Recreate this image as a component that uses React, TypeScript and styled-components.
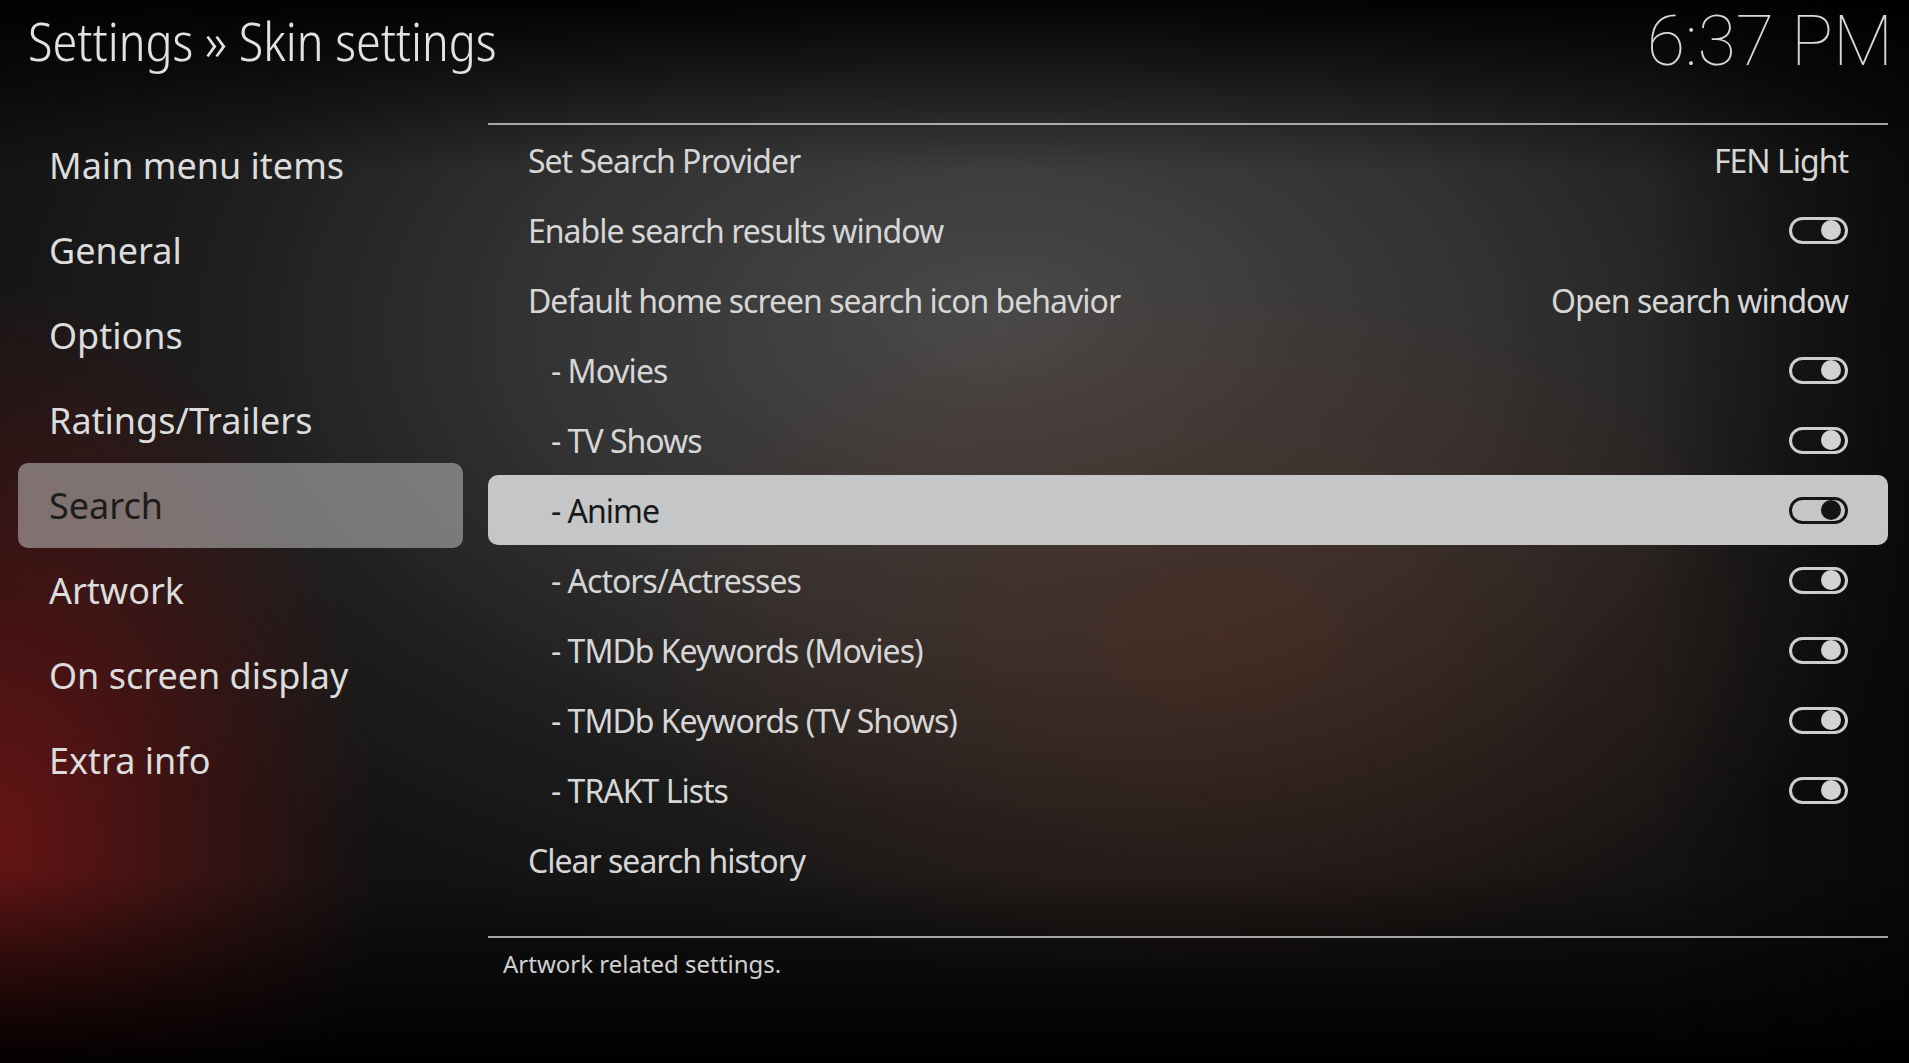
import React from 'react';
import styled, { createGlobalStyle } from 'styled-components';

const GlobalStyle = createGlobalStyle`
  html, body {
    margin: 0;
    padding: 0;
    background: #080808;
  }
  body {
    width: 1909px;
    height: 1063px;
    overflow: hidden;
    font-family: 'Noto Sans', 'Open Sans', sans-serif;
  }
`;

const Screen = styled.div`
  width: 1909px;
  height: 1063px;
  overflow: hidden;
  display: flex;
  flex-direction: column;
  background:
    linear-gradient(to bottom, rgba(0, 0, 0, 0.92) 0px, rgba(0, 0, 0, 0) 170px),
    linear-gradient(to top, rgba(0, 0, 0, 0.95) 0px, rgba(0, 0, 0, 0) 190px),
    linear-gradient(to left, rgba(0, 0, 0, 0.55) 0px, rgba(0, 0, 0, 0) 260px),
    radial-gradient(ellipse 380px 560px at 0px 840px, rgba(120, 20, 20, 0.8), rgba(120, 20, 20, 0) 100%),
    radial-gradient(ellipse 620px 380px at 1220px 640px, rgba(85, 45, 30, 0.55), rgba(85, 45, 30, 0) 100%),
    radial-gradient(ellipse 1100px 650px at 1000px 330px, #4a4a4a 0%, #313131 45%, #1c1c1c 75%, #121212 100%);
`;

const Header = styled.header`
  height: 82px;
  display: flex;
  align-items: center;
  justify-content: space-between;
  padding: 0 16px 0 28px;
`;

const Title = styled.h1`
  margin: 0;
  font-family: 'Noto Sans Display', 'Noto Sans', sans-serif;
  font-weight: 300;
  font-stretch: 87.5%;
  font-size: 52.5px;
  line-height: 1;
  color: #e2e2e2;
`;

const Clock = styled.div`
  font-family: Roboto, 'Inter', sans-serif;
  font-weight: 100;
  font-size: 70px;
  line-height: 1;
  color: #d8d8d8;
`;

const Body = styled.main`
  margin-top: 41px;
  padding-left: 18px;
  display: grid;
  grid-template-columns: 445px 1400px;
  column-gap: 25px;
`;

const Menu = styled.nav`
  display: flex;
  flex-direction: column;
`;

const MenuItem = styled.div<{ $active?: boolean }>`
  height: 85px;
  display: flex;
  align-items: center;
  padding-left: 31px;
  border-radius: 10px;
  font-size: 36px;
  color: ${(p) => (p.$active ? '#1c1c1c' : '#dcdcdc')};
  background: ${(p) => (p.$active ? 'rgba(205, 205, 205, 0.5)' : 'transparent')};
`;

const Panel = styled.section`
  display: flex;
  flex-direction: column;
`;

const Divider = styled.div<{ $gap?: number }>`
  height: 2px;
  margin-top: ${(p) => p.$gap ?? 0}px;
  background: rgba(215, 215, 215, 0.75);
`;

const List = styled.div`
  display: flex;
  flex-direction: column;
`;

const Row = styled.div<{ $active?: boolean; $indent?: boolean }>`
  height: 70px;
  display: flex;
  align-items: center;
  justify-content: space-between;
  padding: 0 40px 0 ${(p) => (p.$indent ? 63 : 40)}px;
  border-radius: 10px;
  font-size: 32px;
  letter-spacing: -1px;
  color: ${(p) => (p.$active ? '#181818' : '#d6d6d6')};
  background: ${(p) => (p.$active ? '#c5c6c8' : 'transparent')};
`;

const Value = styled.span`
  color: inherit;
`;

const Toggle = styled.span<{ $dark?: boolean }>`
  width: 59px;
  height: 27px;
  box-sizing: border-box;
  border: 3px solid ${(p) => (p.$dark ? '#151515' : '#cdcdcd')};
  border-radius: 14px;
  display: flex;
  align-items: center;
  justify-content: flex-end;
  padding-right: 4px;
`;

const Knob = styled.span<{ $dark?: boolean }>`
  width: 20px;
  height: 20px;
  border-radius: 50%;
  background: ${(p) => (p.$dark ? '#141414' : '#d2d2d2')};
`;

const Description = styled.div`
  height: 50px;
  display: flex;
  align-items: center;
  padding-left: 15px;
  font-size: 24px;
  color: #d0d0d0;
`;

type Setting = {
  label: string;
  indent?: boolean;
  value?: string;
  toggle?: boolean;
};

const menu = [
  'Main menu items',
  'General',
  'Options',
  'Ratings/Trailers',
  'Search',
  'Artwork',
  'On screen display',
  'Extra info',
];

const settings: Setting[] = [
  { label: 'Set Search Provider', value: 'FEN Light' },
  { label: 'Enable search results window', toggle: true },
  { label: 'Default home screen search icon behavior', value: 'Open search window' },
  { label: '- Movies', indent: true, toggle: true },
  { label: '- TV Shows', indent: true, toggle: true },
  { label: '- Anime', indent: true, toggle: true },
  { label: '- Actors/Actresses', indent: true, toggle: true },
  { label: '- TMDb Keywords (Movies)', indent: true, toggle: true },
  { label: '- TMDb Keywords (TV Shows)', indent: true, toggle: true },
  { label: '- TRAKT Lists', indent: true, toggle: true },
  { label: 'Clear search history' },
];

const ACTIVE_MENU = 4;
const ACTIVE_ROW = 5;

export default function App() {
  return (
    <>
      <GlobalStyle />
      <Screen>
        <Header>
          <Title>Settings » Skin settings</Title>
          <Clock>6:37 PM</Clock>
        </Header>
        <Body>
          <Menu>
            {menu.map((m, i) => (
              <MenuItem key={m} $active={i === ACTIVE_MENU}>
                {m}
              </MenuItem>
            ))}
          </Menu>
          <Panel>
            <Divider />
            <List>
              {settings.map((s, i) => {
                const active = i === ACTIVE_ROW;
                return (
                  <Row key={s.label} $active={active} $indent={s.indent}>
                    <span>{s.label}</span>
                    {s.value && <Value>{s.value}</Value>}
                    {s.toggle && (
                      <Toggle $dark={active}>
                        <Knob $dark={active} />
                      </Toggle>
                    )}
                  </Row>
                );
              })}
            </List>
            <Divider $gap={41} />
            <Description>Artwork related settings.</Description>
          </Panel>
        </Body>
      </Screen>
    </>
  );
}
